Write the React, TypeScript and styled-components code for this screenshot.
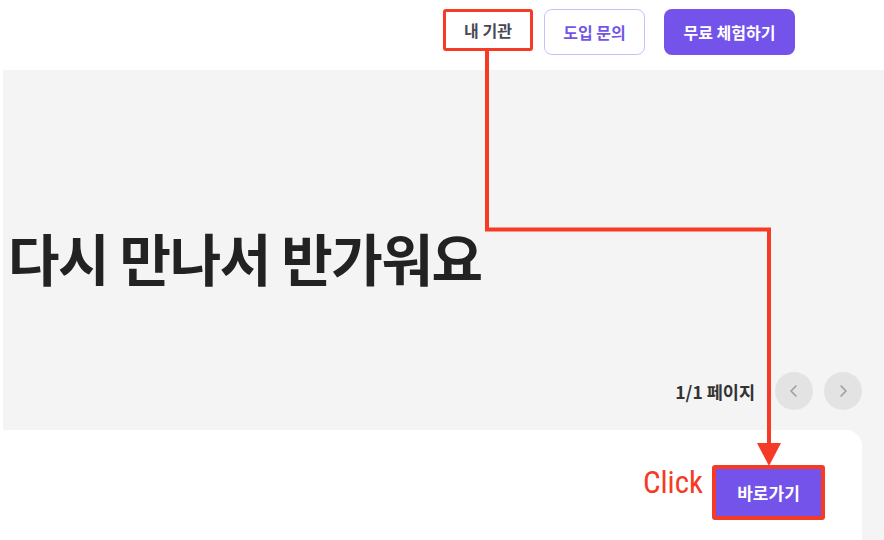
import React from "react";
import styled, { createGlobalStyle } from "styled-components";

const GlobalStyle = createGlobalStyle`
  html, body { margin: 0; padding: 0; background: #ffffff; }
  body { font-family: "Noto Sans CJK KR", "Noto Sans", sans-serif; }
  * { box-sizing: border-box; }
`;

const Page = styled.div`
  position: relative;
  width: 884px;
  height: 540px;
  overflow: hidden;
  background: #ffffff;
`;

const Header = styled.header`
  height: 70px;
  display: flex;
  justify-content: flex-end;
  align-items: flex-start;
  padding: 9px 89px 0 0;
`;

const NavButton = styled.button<{ $variant: "plain" | "outline" | "solid" }>`
  font-family: inherit;
  font-size: 16px;
  font-weight: 700;
  border-radius: ${(p) => (p.$variant === "plain" ? "3px" : "8px")};
  height: ${(p) => (p.$variant === "plain" ? "42px" : "46px")};
  width: ${(p) => (p.$variant === "plain" ? "90px" : p.$variant === "outline" ? "101px" : "131px")};
  margin-left: ${(p) => (p.$variant === "plain" ? "0" : p.$variant === "outline" ? "11px" : "19px")};
  padding: 0;
  cursor: pointer;
  border: ${(p) =>
    p.$variant === "plain"
      ? "3px solid #f53a25"
      : p.$variant === "outline"
      ? "1px solid #cbbff8"
      : "none"};
  background: ${(p) => (p.$variant === "solid" ? "#7353ea" : "#ffffff")};
  color: ${(p) =>
    p.$variant === "plain" ? "#454b55" : p.$variant === "outline" ? "#7356e6" : "#ffffff"};
`;

const Stage = styled.main`
  margin-left: 3px;
  height: 470px;
  background: #f4f4f4;
  display: flex;
  flex-direction: column;
`;

const Hero = styled.section`
  height: 360px;
  display: flex;
  flex-direction: column;
  padding: 153px 22px 20px 5px;
`;

const Title = styled.h1`
  margin: 0;
  font-size: 56px;
  line-height: 67px;
  font-weight: 700;
  color: #222222;
  letter-spacing: -1.4px;
`;

const Pager = styled.div`
  margin-top: auto;
  display: flex;
  justify-content: flex-end;
  align-items: center;
  gap: 11px;
`;

const PagerLabel = styled.span`
  font-size: 17.5px;
  font-weight: 700;
  color: #333333;
  margin-right: 9px;
`;

const RoundButton = styled.button`
  width: 38px;
  height: 38px;
  border-radius: 50%;
  border: none;
  background: #e3e3e3;
  display: flex;
  align-items: center;
  justify-content: center;
  padding: 0;
  color: #9c9c9c;
`;

const Card = styled.section`
  flex: 1;
  margin-right: 22px;
  background: #ffffff;
  border-top-right-radius: 16px;
  display: flex;
  justify-content: flex-end;
  align-items: flex-start;
  padding: 35px 37px 0 0;
  gap: 9px;
`;

const ClickNote = styled.span`
  font-family: "Liberation Sans Narrow", "Roboto Condensed", "DejaVu Sans Condensed", sans-serif;
  font-size: 31px;
  line-height: 36px;
  color: #f53a25;
`;

const GoButton = styled.button`
  width: 113px;
  height: 55px;
  border: 4px solid #f53a25;
  border-radius: 3px;
  background: #7353ea;
  color: #ffffff;
  font-family: inherit;
  font-size: 17px;
  font-weight: 700;
  padding: 0;
  cursor: pointer;
`;

const Overlay = styled.svg`
  position: absolute;
  left: 0;
  top: 0;
  width: 884px;
  height: 540px;
  pointer-events: none;
`;

const Chevron = ({ dir }: { dir: "left" | "right" }) => (
  <svg width="14" height="14" viewBox="0 0 14 14" fill="none">
    <path
      d={dir === "left" ? "M9 2 L4 7 L9 12" : "M5 2 L10 7 L5 12"}
      stroke="currentColor"
      strokeWidth="1.5"
      strokeLinecap="round"
      strokeLinejoin="round"
    />
  </svg>
);

export default function App() {
  return (
    <>
      <GlobalStyle />
      <Page>
        <Header>
          <NavButton $variant="plain">내 기관</NavButton>
          <NavButton $variant="outline">도입 문의</NavButton>
          <NavButton $variant="solid">무료 체험하기</NavButton>
        </Header>
        <Stage>
          <Hero>
            <Title>다시 만나서 반가워요</Title>
            <Pager>
              <PagerLabel>1/1 페이지</PagerLabel>
              <RoundButton aria-label="이전">
                <Chevron dir="left" />
              </RoundButton>
              <RoundButton aria-label="다음">
                <Chevron dir="right" />
              </RoundButton>
            </Pager>
          </Hero>
          <Card>
            <ClickNote>Click</ClickNote>
            <GoButton>바로가기</GoButton>
          </Card>
        </Stage>
        <Overlay viewBox="0 0 884 540">
          <path
            d="M487 51 V229.5 H769 V446"
            fill="none"
            stroke="#f53a25"
            strokeWidth="4"
          />
          <polygon points="757,443 781,443 769,466" fill="#f53a25" />
        </Overlay>
      </Page>
    </>
  );
}
